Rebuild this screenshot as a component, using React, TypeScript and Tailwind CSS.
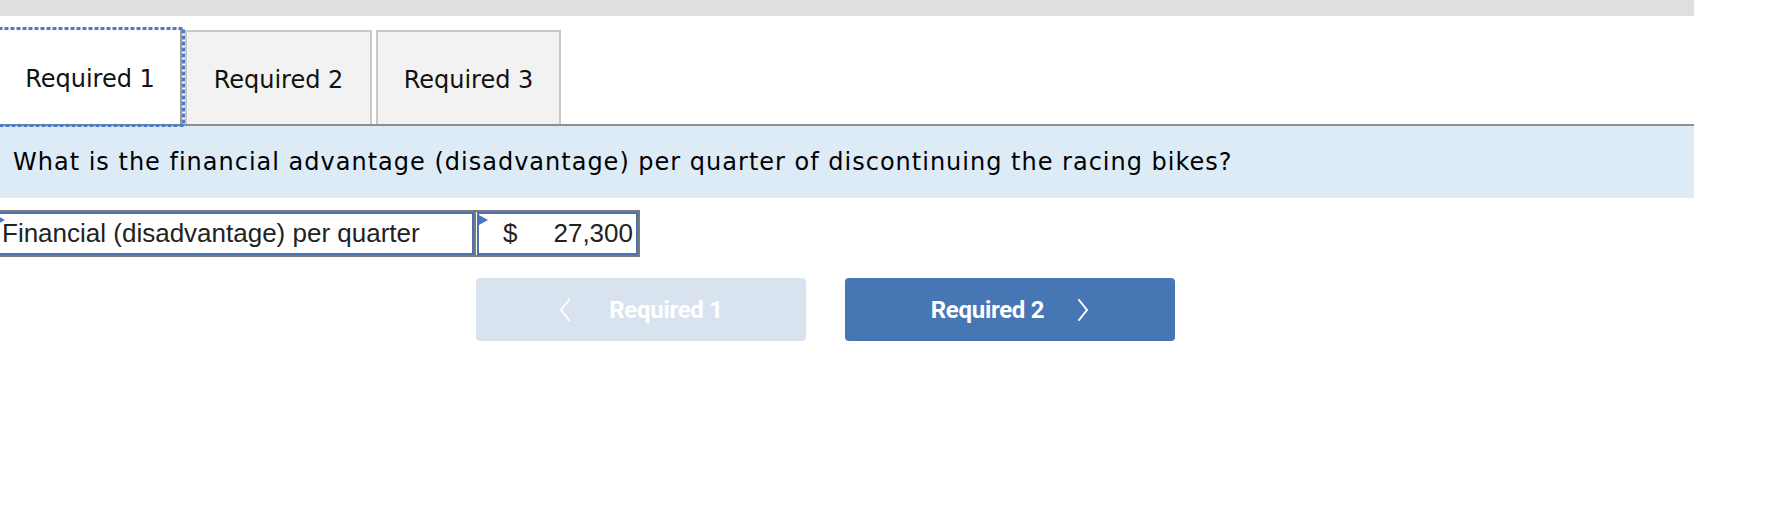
import React from "react";

const Chevron = ({ dir }: { dir: "left" | "right" }) => (
  <svg width="12" height="22" viewBox="0 0 12 22" fill="none">
    <polyline
      points={dir === "left" ? "10,1 2,11 10,21" : "2,1 10,11 2,21"}
      stroke="#ffffff"
      strokeWidth="2"
      strokeLinecap="round"
      strokeLinejoin="round"
    />
  </svg>
);

const Marker = () => (
  <div className="absolute left-0 top-[1px] w-0 h-0 border-y-[5px] border-y-transparent border-l-[9px] border-l-[#4a78c0]" />
);

export default function App() {
  return (
    <div className="w-[1770px] h-[518px] bg-white overflow-hidden">
      <div className="w-[1694px]">
        <div className="h-4 bg-[#dfdfdf]" />
        <div className="flex items-end pt-[14px] border-b-2 border-[#8e8e8e] font-['DejaVu_Sans',sans-serif] text-[24px] text-[#111]">
          <div className="relative w-[182px] h-[94px] bg-white border-r-2 border-[#9a9a9a] flex items-center justify-center pt-[4px]">
            Required 1
            <svg className="absolute left-[-3px] top-[-3px] w-[188px] h-[100px]" viewBox="0 0 188 100">
              <rect x="1.5" y="1.5" width="185" height="97" fill="none" stroke="#4a7bc4" strokeWidth="3" strokeDasharray="4 2" />
            </svg>
          </div>
          <div className="ml-[3px] w-[187px] h-[94px] bg-[#f2f2f2] border-2 border-b-0 border-[#c8c8c8] flex items-center justify-center pt-[4px]">
            Required 2
          </div>
          <div className="ml-[4px] w-[185px] h-[94px] bg-[#f2f2f2] border-2 border-b-0 border-[#c8c8c8] flex items-center justify-center pt-[4px]">
            Required 3
          </div>
        </div>
        <div className="h-[72px] bg-[#ddebf7] flex items-center pl-[13px] font-['DejaVu_Sans',sans-serif] text-[24px] tracking-[1px] text-black">
          What is the financial advantage (disadvantage) per quarter of discontinuing the racing bikes?
        </div>
        <div className="mt-3 ml-[-8px] flex w-fit border-2 border-[#7a7a7a] font-['Liberation_Sans',Arial,sans-serif] text-[26px] text-[#222]">
          <div className="relative w-[480px] h-[43px] border-2 border-[#4a72b2] flex items-center pl-[6px]">
            <Marker />
            Financial (disadvantage) per quarter
          </div>
          <div className="w-[2px] bg-[#7a7a7a]" />
          <div className="ml-[1px] relative w-[161px] h-[43px] border-2 border-[#4a72b2] flex items-center justify-between pl-[24px] pr-[3px]">
            <Marker />
            <span>$</span>
            <span>27,300</span>
          </div>
        </div>
        <div className="mt-[21px] ml-[476px] flex gap-[39px] font-['Roboto',sans-serif] font-bold text-[24px] text-white tracking-[-0.3px]">
          <div className="w-[330px] h-[63px] rounded-[4px] bg-[#d9e3ef] flex items-center justify-center">
            <Chevron dir="left" />
            <span className="ml-[38px]">Required 1</span>
          </div>
          <div className="w-[330px] h-[63px] rounded-[4px] bg-[#4776b4] flex items-center justify-center">
            <span className="mr-[33px]">Required 2</span>
            <Chevron dir="right" />
          </div>
        </div>
      </div>
    </div>
  );
}
